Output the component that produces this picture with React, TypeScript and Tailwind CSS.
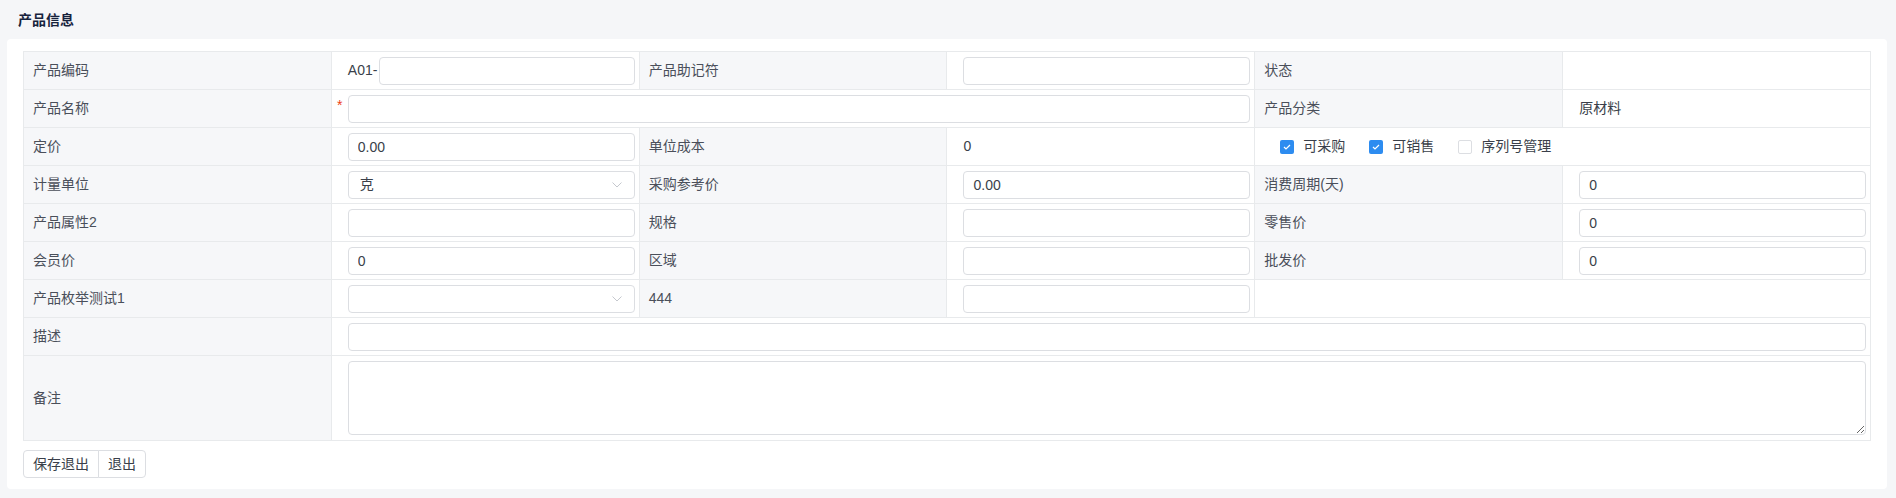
import React from "react";

const label =
  "h-[38px] border border-[#e8eaec] bg-[#f6f7f9] pl-[9px] text-[14px] text-[#4a4f5a] align-middle";
const cell = "h-[38px] border border-[#e8eaec] bg-white pl-4 pr-[4px] align-middle";
const input =
  "block h-[28px] w-full rounded-[4px] border border-[#dcdee2] bg-white px-[9px] text-[14px] text-[#3a3f4a] outline-none";

function Field({ value = "" }: { value?: string }) {
  return <input className={input} defaultValue={value} />;
}

function Select({ value = "" }: { value?: string }) {
  return (
    <div className="flex h-[28px] w-full items-center justify-between rounded-[4px] border border-[#dcdee2] bg-white pl-[11px] pr-[12px] text-[14px] text-[#3a3f4a]">
      <span>{value}</span>
      <svg width="10" height="6" viewBox="0 0 10 6" fill="none">
        <polyline points="0.5,0.5 5,5 9.5,0.5" stroke="#c5c8ce" strokeWidth="1" />
      </svg>
    </div>
  );
}

function Check({ checked, text }: { checked: boolean; text: string }) {
  return (
    <label className="mr-[24px] flex items-center text-[14px] text-[#3a3f4a]">
      {checked ? (
        <span className="flex h-[14px] w-[14px] items-center justify-center rounded-[2px] bg-[#2d8cf0]">
          <svg width="8" height="6" viewBox="0 0 8 6" fill="none">
            <polyline points="1,3 3,5 7,1" stroke="#fff" strokeWidth="1.2" />
          </svg>
        </span>
      ) : (
        <span className="h-[14px] w-[14px] rounded-[2px] border border-[#dcdee2] bg-white" />
      )}
      <span className="ml-[9px]">{text}</span>
    </label>
  );
}

export default function App() {
  return (
    <div className="min-h-[498px] bg-[#f5f6f8] font-[Liberation_Sans,Noto_Sans_CJK_SC,sans-serif]">
      <div className="flex h-[39px] items-center pl-[18px] pt-[2px] text-[14px] font-bold text-[#17233d]">
        产品信息
      </div>
      <div className="ml-[7px] mr-[9px] rounded-[4px] bg-white px-4 pb-[11px] pt-[12px]">
        <table className="w-full table-fixed border-collapse border border-[#e8eaec]">
          <colgroup>
            <col />
            <col />
            <col />
            <col />
            <col />
            <col />
          </colgroup>
          <tbody>
            <tr>
              <td className={label}>产品编码</td>
              <td className={cell}>
                <div className="flex items-center text-[14px] text-[#3a3f4a]">
                  <span className="mr-[2px]">A01-</span>
                  <Field />
                </div>
              </td>
              <td className={label}>产品助记符</td>
              <td className={cell}>
                <Field />
              </td>
              <td className={label}>状态</td>
              <td className={cell}></td>
            </tr>
            <tr>
              <td className={label}>产品名称</td>
              <td colSpan={3} className="h-[38px] border border-[#e8eaec] bg-white pr-[4px] align-middle">
                <div className="flex items-start">
                  <span className="w-4 pt-[3px] text-center text-[14px] leading-[14px] text-[#ed4014]">*</span>
                  <Field />
                </div>
              </td>
              <td className={label}>产品分类</td>
              <td className={`${cell} text-[14px] text-[#3a3f4a]`}>原材料</td>
            </tr>
            <tr>
              <td className={label}>定价</td>
              <td className={cell}>
                <Field value="0.00" />
              </td>
              <td className={label}>单位成本</td>
              <td className={`${cell} text-[14px] text-[#3a3f4a]`}>0</td>
              <td colSpan={2} className="h-[38px] border border-[#e8eaec] bg-white pl-[25px] align-middle">
                <div className="flex items-center">
                  <Check checked text="可采购" />
                  <Check checked text="可销售" />
                  <Check checked={false} text="序列号管理" />
                </div>
              </td>
            </tr>
            <tr>
              <td className={label}>计量单位</td>
              <td className={cell}>
                <Select value="克" />
              </td>
              <td className={label}>采购参考价</td>
              <td className={cell}>
                <Field value="0.00" />
              </td>
              <td className={label}>消费周期(天)</td>
              <td className={cell}>
                <Field value="0" />
              </td>
            </tr>
            <tr>
              <td className={label}>产品属性2</td>
              <td className={cell}>
                <Field />
              </td>
              <td className={label}>规格</td>
              <td className={cell}>
                <Field />
              </td>
              <td className={label}>零售价</td>
              <td className={cell}>
                <Field value="0" />
              </td>
            </tr>
            <tr>
              <td className={label}>会员价</td>
              <td className={cell}>
                <Field value="0" />
              </td>
              <td className={label}>区域</td>
              <td className={cell}>
                <Field />
              </td>
              <td className={label}>批发价</td>
              <td className={cell}>
                <Field value="0" />
              </td>
            </tr>
            <tr>
              <td className={label}>产品枚举测试1</td>
              <td className={cell}>
                <Select />
              </td>
              <td className={label}>444</td>
              <td className={cell}>
                <Field />
              </td>
              <td colSpan={2} className={cell}></td>
            </tr>
            <tr>
              <td className={label}>描述</td>
              <td colSpan={5} className={cell}>
                <Field />
              </td>
            </tr>
            <tr>
              <td className="h-[85px] border border-[#e8eaec] bg-[#f6f7f9] pl-[9px] text-[14px] text-[#4a4f5a] align-middle">
                备注
              </td>
              <td colSpan={5} className="h-[85px] border border-[#e8eaec] bg-white pl-4 pr-[4px] align-middle">
                <textarea className="block h-[74px] w-full rounded-[4px] border border-[#dcdee2] bg-white px-[9px] py-[4px] text-[14px] outline-none" />
              </td>
            </tr>
          </tbody>
        </table>
        <div className="mt-[9px] flex">
          <button className="h-[28px] rounded-l-[4px] border border-[#dcdee2] bg-white px-[9px] text-[14px] text-[#3a3f4a]">
            保存退出
          </button>
          <button className="-ml-px h-[28px] rounded-r-[4px] border border-[#dcdee2] bg-white px-[9px] text-[14px] text-[#3a3f4a]">
            退出
          </button>
        </div>
      </div>
    </div>
  );
}
